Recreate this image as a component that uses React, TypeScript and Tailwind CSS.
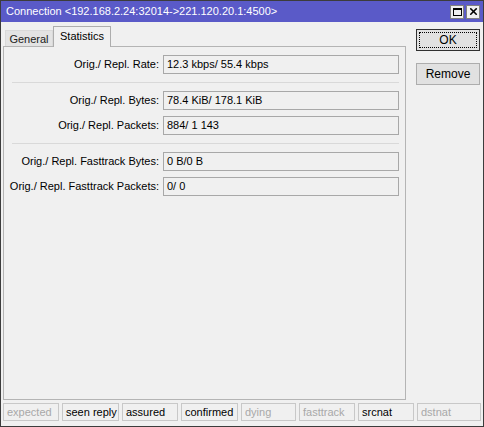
import { X } from 'lucide-react'

const FONT = { fontFamily: "'Liberation Sans', Arial, sans-serif" }

// Statistics rows, split into groups by a separator line
const GROUPS: { label: string; value: string }[][] = [
  [{ label: 'Orig./ Repl. Rate:', value: '12.3 kbps/ 55.4 kbps' }],
  [
    { label: 'Orig./ Repl. Bytes:', value: '78.4 KiB/ 178.1 KiB' },
    { label: 'Orig./ Repl. Packets:', value: '884/ 1 143' },
  ],
  [
    { label: 'Orig./ Repl. Fasttrack Bytes:', value: '0 B/0 B' },
    { label: 'Orig./ Repl. Fasttrack Packets:', value: '0/ 0' },
  ],
]

// Connection state flags shown in the status strip
const FLAGS = [
  { name: 'expected', on: false, w: 'w-[56px]' },
  { name: 'seen reply', on: true, w: 'w-[57px]' },
  { name: 'assured', on: true, w: 'w-[56px]' },
  { name: 'confirmed', on: true, w: 'w-[57px]' },
  { name: 'dying', on: false, w: 'w-[55px]' },
  { name: 'fasttrack', on: false, w: 'w-[56px]' },
  { name: 'srcnat', on: true, w: 'w-[56px]' },
  { name: 'dstnat', on: false, w: 'flex-1' },
]

function Row({ label, value }: { label: string; value: string }) {
  return (
    <div className="flex items-center h-[19px]">
      <div className="w-[158px] pr-[4px] text-right whitespace-nowrap">{label}</div>
      <div className="w-[236px] h-[19px] border border-[#a8a8a8] bg-[#f0f0f0] pl-[3px] leading-[17px] whitespace-nowrap">
        {value}
      </div>
    </div>
  )
}

export default function App() {
  return (
    <div
      className="w-[484px] h-[427px] border border-[#3c3c3c] bg-[#f0f0f0] text-[11px] text-black flex flex-col overflow-hidden"
      style={FONT}
    >
      {/* Title bar */}
      <div className="h-[21px] bg-[#5a5ac8] flex items-center pl-[5px] pr-[3px] shrink-0">
        <div className="text-white text-[11px] whitespace-nowrap">
          Connection &lt;192.168.2.24:32014-&gt;221.120.20.1:4500&gt;
        </div>
        <div className="ml-auto flex gap-[2px]">
          <button className="w-[14px] h-[14px] bg-[#f0f0f0] border border-[#808080] flex items-center justify-center">
            <span className="block w-[9px] h-[8px] border border-black border-t-2" />
          </button>
          <button className="w-[14px] h-[14px] bg-[#f0f0f0] border border-[#808080] flex items-center justify-center">
            <X size={11} strokeWidth={3.5} className="text-black" />
          </button>
        </div>
      </div>

      <div className="flex flex-1 min-h-0 pl-[2px] pr-[3px]">
        {/* Left: tabs and panel */}
        <div className="flex flex-col w-[404px]">
          <div className="flex items-end h-[24px] pl-[2px] shrink-0">
            <div className="h-[16px] w-[48px] text-center bg-[#e3e3e3] border border-b-0 border-[#d9d9d9] leading-[16px] text-[#202020]">
              General
            </div>
            <div className="h-[21px] w-[58px] text-center bg-[#f0f0f0] border border-b-0 border-[#adadad] leading-[18px] -mb-px relative z-10">
              Statistics
            </div>
          </div>
          <div className="h-[355px] border border-[#b4b4b4] bg-[#f0f0f0] pt-[8px] pl-[1px]">
            {GROUPS.map((group, gi) => (
              <div key={gi}>
                {gi > 0 && <div className="ml-[7px] w-[387px] h-px bg-[#d9d9d9] my-[8px]" />}
                <div className="flex flex-col gap-[6px]">
                  {group.map((r) => (
                    <Row key={r.label} label={r.label} value={r.value} />
                  ))}
                </div>
              </div>
            ))}
          </div>
        </div>

        {/* Right: dialog buttons */}
        <div className="flex flex-col gap-[12px] pt-[7px] pl-[10px] w-[74px]">
          <button className="h-[22px] w-[64px] border border-[#303030] bg-[#e1e1e1] p-[2px] text-[12px]">
            <span className="flex items-center justify-center w-full h-full border border-dotted border-black">OK</span>
          </button>
          <button className="h-[22px] w-[64px] border border-[#adadad] bg-[#e1e1e1] text-[12px]">Remove</button>
        </div>
      </div>

      {/* Status strip */}
      <div className="flex gap-[3px] px-[2px] pt-[3px] pb-[5px] shrink-0">
        {FLAGS.map((f) => (
          <div
            key={f.name}
            className={`${f.w} min-w-0 overflow-hidden h-[18px] border border-[#c8c8c8] pl-[3px] leading-[16px] whitespace-nowrap ${
              f.on ? 'text-black' : 'text-[#a8a8a8]'
            }`}
          >
            {f.name}
          </div>
        ))}
      </div>
    </div>
  )
}
